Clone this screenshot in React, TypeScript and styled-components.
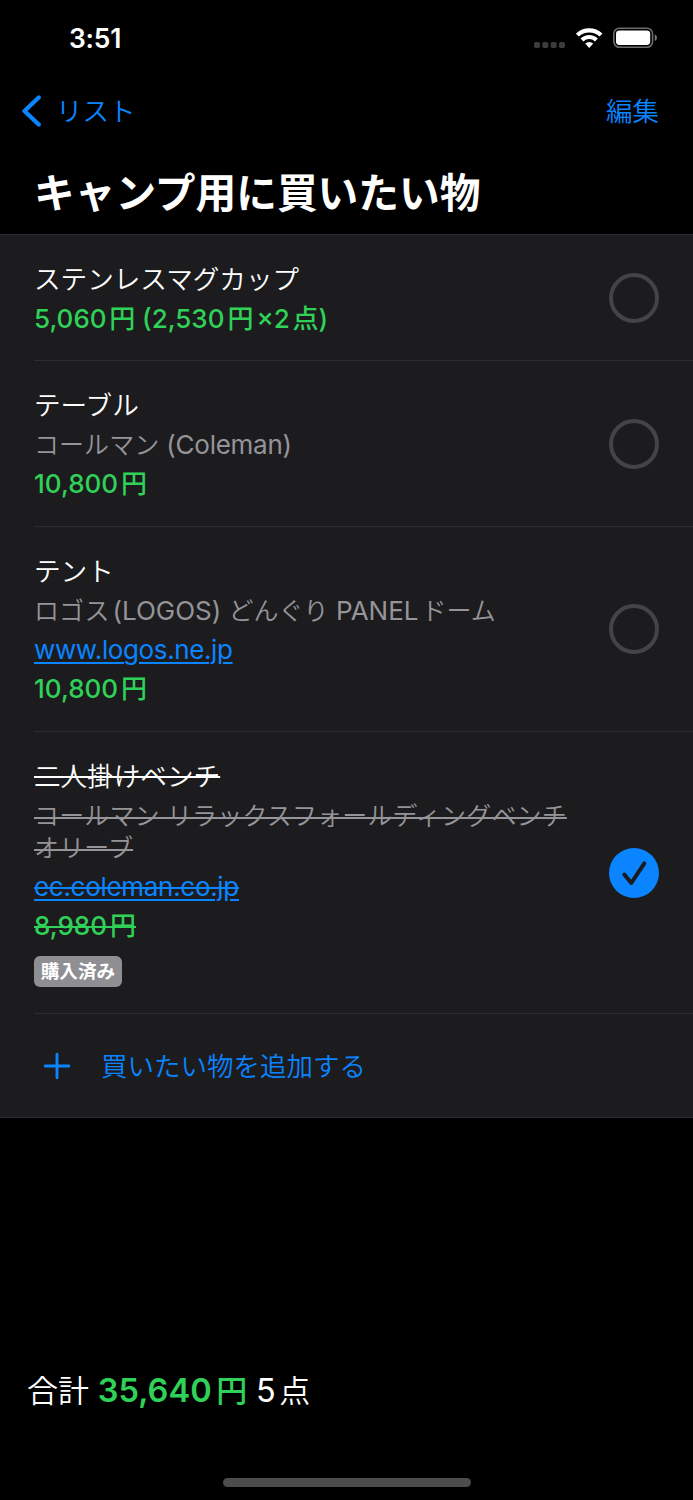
import React from "react";
import styled, { createGlobalStyle } from "styled-components";

const color = {
  blue: "#0a84ff",
  green: "#30d158",
  gray: "#8e8e93",
  secondary: "#949499",
  panel: "#1c1c1e",
  line: "#2d2d2f",
  ring: "#444447",
};

const GlobalStyle = createGlobalStyle`
  * { box-sizing: border-box; }
  body {
    margin: 0;
    background: #000;
    color: #fff;
    font-family: Inter, "Noto Sans CJK JP", sans-serif;
  }
`;

const Screen = styled.div`
  width: 693px;
  height: 1500px;
  display: flex;
  flex-direction: column;
  background: #000;
  overflow: hidden;
`;

const StatusBar = styled.header`
  height: 76px;
  display: flex;
  align-items: center;
  justify-content: space-between;
  padding: 0 36px 0 69px;
`;

const Clock = styled.time`
  font-size: 26.4px;
  font-weight: 600;
  line-height: 32px;
  letter-spacing: -0.2px;
`;

const StatusIcons = styled.div`
  display: flex;
  align-items: center;
`;

const NavBar = styled.nav`
  height: 72px;
  display: flex;
  align-items: center;
  justify-content: space-between;
  padding: 0 34px 3px 22px;
  color: ${color.blue};
`;

const NavButton = styled.a`
  display: flex;
  align-items: center;
  gap: 15px;
  font-size: 26.5px;
  font-weight: 350;
  line-height: 40px;
`;

const Heading = styled.h1`
  margin: 0;
  height: 86px;
  padding: 16px 34px 0;
  font-size: 40.7px;
  line-height: 60px;
  font-weight: 700;
`;

const List = styled.ul`
  list-style: none;
  margin: 0;
  padding: 0;
  background: ${color.panel};
  border-top: 1px solid ${color.line};
  border-bottom: 1px solid ${color.line};
`;

const Row = styled.li<{ $height: number }>`
  height: ${(p) => p.$height}px;
  margin-left: 34px;
  padding-right: 34px;
  display: flex;
  align-items: center;
  justify-content: space-between;
  border-bottom: 1px solid ${color.line};

  &:last-child {
    border-bottom: 0;
  }
`;

const RowBody = styled.div`
  align-self: flex-start;
  padding-top: 25px;
`;

type Tone = "title" | "detail" | "link" | "price";

const toneColor: Record<Tone, string> = {
  title: "#fff",
  detail: color.secondary,
  link: color.blue,
  price: color.green,
};

const toneWeight: Record<Tone, number> = {
  title: 350,
  detail: 400,
  link: 400,
  price: 500,
};

const Line = styled.div<{ $tone: Tone; $tight?: boolean }>`
  height: ${(p) => (p.$tight ? 31.5 : 39.1)}px;
  line-height: ${(p) => (p.$tight ? 31.5 : 39.1)}px;
  font-size: ${(p) => (p.$tone === "title" ? 26.6 : 26)}px;
  font-weight: ${(p) => toneWeight[p.$tone]};
  color: ${(p) => toneColor[p.$tone]};
  white-space: pre;
`;

const Wrapped = styled.div`
  padding: 4px 0;
`;

const Mark = styled.span<{ $struck?: boolean; $underlined?: boolean }>`
  text-decoration-line: ${(p) =>
    [p.$underlined && "underline", p.$struck && "line-through"].filter(Boolean).join(" ") || "none"};
  text-decoration-thickness: 2px;
  text-underline-offset: 3px;
`;

const Run = styled.span<{ $track?: number; $gap?: number; $size?: number; $weight?: number }>`
  letter-spacing: ${(p) => p.$track ?? 0}px;
  padding-left: ${(p) => p.$gap ?? 0}px;
  ${(p) => (p.$size ? `font-size: ${p.$size}px;` : "")}
  ${(p) => (p.$weight ? `font-weight: ${p.$weight};` : "")}
`;

const Badge = styled.span`
  display: block;
  width: 88.6px;
  height: 31px;
  margin: 11px 0 0 -0.4px;
  border-radius: 6px;
  background: ${color.gray};
  font-size: 18.6px;
  font-weight: 700;
  line-height: 30px;
  text-align: center;
`;

const AddIcon = styled.span`
  display: flex;
  width: 67px;
  padding-left: 8px;
`;

const AddButton = styled.a`
  display: flex;
  align-items: center;
  color: ${color.blue};
  font-size: 26.5px;
  font-weight: 350;
  line-height: 40px;
`;

const Footer = styled.footer`
  flex: 1;
  display: flex;
  flex-direction: column;
  justify-content: flex-end;
`;

const Summary = styled.div`
  height: 48px;
  margin-bottom: 64px;
  padding-left: 27px;
  font-size: 31px;
  line-height: 48px;
  white-space: pre;
`;

const Total = styled.strong`
  color: ${color.green};
  font-weight: 600;
`;

const HomeIndicator = styled.div`
  width: 248px;
  height: 9px;
  margin: 0 0 13.5px 222.5px;
  border-radius: 5px;
  background: #4c4c4c;
`;

const SignalIcon = () => (
  <svg width="42" height="22" viewBox="0 0 42 22" fill="#3c3c3d">
    {[0, 8.3, 16.7, 25].map((x) => (
      <rect key={x} x={x} y="15" width="6" height="6" rx="1.8" />
    ))}
  </svg>
);

const WifiIcon = () => (
  <svg width="37" height="22" viewBox="0 0 37 22" fill="none" stroke="#fff" strokeWidth="4.1">
    <path d="M1.4 8.1a17 17 0 0 1 23.6 0" />
    <path d="M6 13a10.3 10.3 0 0 1 14.4 0" />
    <path d="M9.2 16.600a5.8 5.8 0 0 1 8 0L13.2 20.9Z" fill="#fff" stroke="none" />
  </svg>
);

const BatteryIcon = () => (
  <svg width="44" height="22" viewBox="0 0 44 22">
    <rect x="0.8" y="1.3" width="38.8" height="18.9" rx="5.6" fill="none" stroke="#6c6c6c" strokeWidth="1.6" />
    <rect x="3" y="3.600" width="34.2" height="14.3" rx="3.4" fill="#fff" />
    <path d="M41.8 7.500c2.8 1.2 2.8 5.400 0 6.600z" fill="#7c7c7c" />
  </svg>
);

const ChevronIcon = () => (
  <svg width="19" height="32" viewBox="0 0 19 32" fill="none" stroke={color.blue} strokeWidth="4.3" strokeLinecap="round" strokeLinejoin="round">
    <path d="M16.700 2.500L2.500 16L16.700 29.500" />
  </svg>
);

const PlusIcon = () => (
  <svg width="30" height="30" viewBox="0 0 30 30" stroke={color.blue} strokeWidth="2.9" strokeLinecap="round">
    <path d="M15 3.200V26.800M3.200 15H26.800" />
  </svg>
);

const CheckCircle = ({ checked }: { checked?: boolean }) => (
  <svg width="50" height="50" viewBox="0 0 50 50" fill="none">
    {checked ? (
      <>
        <circle cx="25" cy="25" r="25" fill={color.blue} />
        <path d="M15.300 26.500L22.300 35L35.300 15.300" stroke={color.panel} strokeWidth="4" strokeLinecap="round" strokeLinejoin="round" />
      </>
    ) : (
      <circle cx="25" cy="25" r="23" stroke={color.ring} strokeWidth="4" />
    )}
  </svg>
);

export default function App() {
  return (
    <Screen>
      <GlobalStyle />
      <StatusBar>
        <Clock>3:51</Clock>
        <StatusIcons>
          <SignalIcon />
          <WifiIcon />
          <BatteryIcon />
        </StatusIcons>
      </StatusBar>
      <NavBar>
        <NavButton>
          <ChevronIcon />
          リスト
        </NavButton>
        <NavButton>編集</NavButton>
      </NavBar>
      <Heading>キャンプ用に買いたい物</Heading>

      <List>
        <Row $height={126}>
          <RowBody>
            <Line $tone="title">ステンレスマグカップ</Line>
            <Line $tone="price">
              <Run>5,060</Run>
              <Run $gap={2.6}>円</Run>
              <Run> (2,530</Run>
              <Run $gap={3}>円</Run>
              <Run $gap={3}>×2</Run>
              <Run $gap={2.6}>点</Run>
              <Run>)</Run>
            </Line>
          </RowBody>
          <CheckCircle />
        </Row>
        <Row $height={166}>
          <RowBody>
            <Line $tone="title">テーブル</Line>
            <Line $tone="detail">
              <Run $size={25} $track={0.05} $weight={350}>コールマン</Run>
              <Run $track={-0.25}> (Coleman)</Run>
            </Line>
            <Line $tone="price">
              <Run>10,800</Run>
              <Run $gap={3}>円</Run>
            </Line>
          </RowBody>
          <CheckCircle />
        </Row>
        <Row $height={205}>
          <RowBody>
            <Line $tone="title">テント</Line>
            <Line $tone="detail">
              <Run $size={25} $weight={350}>ロゴス</Run>
              <Run $gap={3}>(LOGOS) </Run>
              <Run $size={25} $weight={350}>どんぐり</Run>
              <Run> PANEL</Run>
              <Run $size={25} $gap={3} $weight={350}>ドーム</Run>
            </Line>
            <Line $tone="link">
              <Mark $underlined>
                <Run $track={-0.38}>www.logos.ne.jp</Run>
              </Mark>
            </Line>
            <Line $tone="price">
              <Run>10,800</Run>
              <Run $gap={3}>円</Run>
            </Line>
          </RowBody>
          <CheckCircle />
        </Row>
        <Row $height={282}>
          <RowBody>
            <Line $tone="title">
              <Mark $struck>二人掛けベンチ</Mark>
            </Line>
            <Wrapped>
              <Line $tone="detail" $tight>
                <Mark $struck>
                  <Run $size={25} $track={0.15} $weight={350}>コールマン リラックスフォールディングベンチ</Run>
                </Mark>
              </Line>
              <Line $tone="detail" $tight>
                <Mark $struck>
                  <Run $size={25} $track={0.15} $weight={350}>オリーブ</Run>
                </Mark>
              </Line>
            </Wrapped>
            <Line $tone="link">
              <Mark $underlined $struck>
                <Run $track={-0.3}>ec.coleman.co.jp</Run>
              </Mark>
            </Line>
            <Line $tone="price">
              <Mark $struck>
                8,98<Run $track={3}>0</Run>円
              </Mark>
            </Line>
            <Badge>購入済み</Badge>
          </RowBody>
          <CheckCircle checked />
        </Row>
        <Row $height={103}>
          <AddButton>
            <AddIcon>
              <PlusIcon />
            </AddIcon>
            買いたい物を追加する
          </AddButton>
        </Row>
      </List>

      <Footer>
        <Summary>
          <Run $weight={350}>合計</Run>{" "}
          <Total>
            <Run $size={32.6}>35,640</Run>
            <Run $gap={4.6} $weight={500}>円</Run>
          </Total>{" "}
          <Run $size={32.4}>5</Run>
          <Run $gap={3.600} $weight={350}>点</Run>
        </Summary>
        <HomeIndicator />
      </Footer>
    </Screen>
  );
}
